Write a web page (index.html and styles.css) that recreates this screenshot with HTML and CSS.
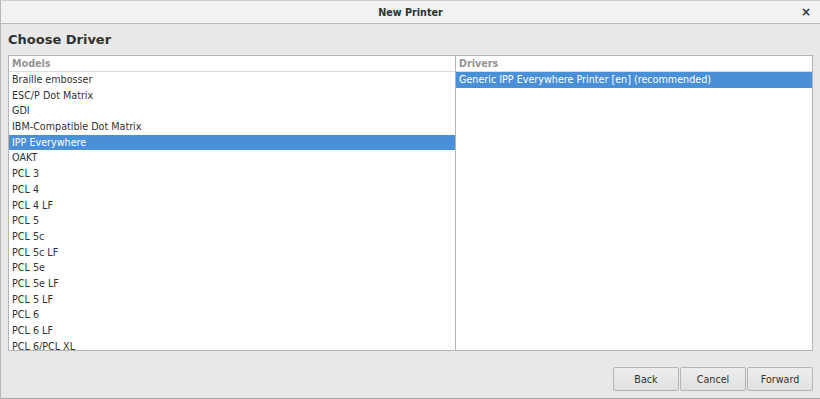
FILE: index.html
```html
<!DOCTYPE html>
<html lang="en">
<head>
    <meta charset="UTF-8">
    <title>New Printer</title>
    <link rel="stylesheet" href="styles.css">
</head>
<body>
    <div class="window">
        <div class="titlebar">
            <span class="title">New Printer</span>
            <span class="close">×</span>
        </div>
        <div class="content">
            <h2 class="heading">Choose Driver</h2>
            <div class="panes">
                <div class="pane models">
                    <div class="pane-header">Models</div>
                    <ul class="list">
                        <li>Braille embosser</li>
                        <li>ESC/P Dot Matrix</li>
                        <li>GDI</li>
                        <li>IBM-Compatible Dot Matrix</li>
                        <li class="selected">IPP Everywhere</li>
                        <li>OAKT</li>
                        <li>PCL 3</li>
                        <li>PCL 4</li>
                        <li>PCL 4 LF</li>
                        <li>PCL 5</li>
                        <li>PCL 5c</li>
                        <li>PCL 5c LF</li>
                        <li>PCL 5e</li>
                        <li>PCL 5e LF</li>
                        <li>PCL 5 LF</li>
                        <li>PCL 6</li>
                        <li>PCL 6 LF</li>
                        <li>PCL 6/PCL XL</li>
                    </ul>
                </div>
                <div class="pane drivers">
                    <div class="pane-header">Drivers</div>
                    <ul class="list">
                        <li class="selected">Generic IPP Everywhere Printer [en] (recommended)</li>
                    </ul>
                </div>
            </div>
            <div class="buttons">
                <button>Back</button>
                <button>Cancel</button>
                <button>Forward</button>
            </div>
        </div>
    </div>
</body>
</html>
```

FILE: styles.css
```css
body {
    margin: 0;
    background-color: #e8e8e8;
    font-family: "DejaVu Sans", sans-serif;
    font-size: 9.6px;
    color: #2e3436;
}
.window {
    height: 397px;
    border-left: 1px solid #b8b8b8;
    border-top: 1px solid #c9d3da;
    border-bottom: 1px solid #a8a8a8;
    overflow: hidden;
}
.titlebar {
    height: 22px;
    background-color: #f2f2f2;
    border-bottom: 1px solid #b9b9b9;
    display: flex;
    align-items: center;
    justify-content: center;
    position: relative;
}
.title {
    font-weight: bold;
    font-size: 9.6px;
}
.close {
    position: absolute;
    right: 9px;
    top: 4px;
    font-weight: bold;
    font-size: 12px;
}
.content {
    padding: 0 7px 0 7px;
}
.heading {
    margin: 0;
    padding-top: 7px;
    height: 24px;
    font-size: 13px;
    line-height: 17px;
}
.panes {
    display: flex;
    height: 296px;
}
.pane {
    background-color: white;
    border: 1px solid #b5b5b5;
    overflow: hidden;
}
.models {
    width: 446px;
}
.drivers {
    flex: 1;
    border-left: none;
}
.pane-header {
    height: 15px;
    line-height: 16px;
    padding-left: 3px;
    font-weight: bold;
    color: #949494;
    border-bottom: 1px solid #dcdcdc;
}
.list {
    list-style: none;
    margin: 0;
    padding: 0;
}
.list li {
    height: 15.7px;
    line-height: 15.7px;
    padding-left: 3px;
    white-space: nowrap;
}
.list li.selected {
    background-color: #4a90d9;
    color: white;
}
.models .list {
    height: 278px;
    overflow: hidden;
    border-bottom: 1px dashed #d8d8d8;
}
.buttons {
    display: flex;
    justify-content: flex-end;
    gap: 1px;
    margin-top: 16px;
}
button {
    width: 66px;
    height: 24px;
    font-family: "DejaVu Sans", sans-serif;
    font-size: 9.6px;
    color: #2e3436;
    background: linear-gradient(#ededed, #e0e0e0);
    border: 1px solid #b6b6b6;
    border-radius: 2px;
}
```
